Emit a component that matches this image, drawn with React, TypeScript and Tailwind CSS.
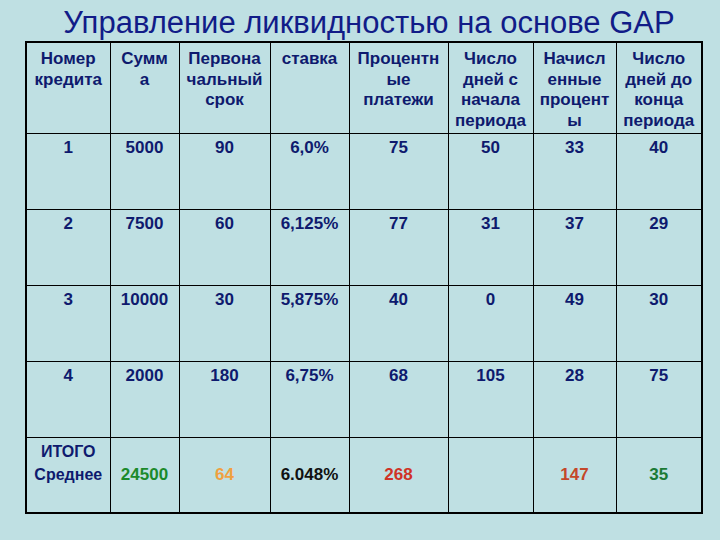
import React from "react";

const navy = "text-[#0e1a6e]";

const rows = [
  ["1", "5000", "90", "6,0%", "75", "50", "33", "40"],
  ["2", "7500", "60", "6,125%", "77", "31", "37", "29"],
  ["3", "10000", "30", "5,875%", "40", "0", "49", "30"],
  ["4", "2000", "180", "6,75%", "68", "105", "28", "75"],
];

const widths = [84, 69, 91, 79, 99, 85, 83, 86];

export default function App() {
  return (
    <div
      className="w-[720px] h-[540px] bg-[#bfe0e3] overflow-hidden"
      style={{ fontFamily: '"Liberation Sans", Arial, sans-serif' }}
    >
      <div className="h-[41px] pt-[5px] pl-[18px] text-center text-[31px] leading-[36px] text-[#111c88] whitespace-nowrap">
        Управление ликвидностью на основе GAP
      </div>
      <table className="ml-[25px] w-[676px] table-fixed border-collapse border-2 border-black text-[17px] font-bold">
        <colgroup>
          {widths.map((w, i) => (
            <col key={i} style={{ width: w }} />
          ))}
        </colgroup>
        <thead>
          <tr className="h-[91px]">
            {[
              ["Номер", "кредита"],
              ["Сумм", "а"],
              ["Первона", "чальный", "срок"],
              ["ставка"],
              ["Процентн", "ые", "платежи"],
              ["Число", "дней с", "начала", "периода"],
              ["Начисл", "енные", "процент", "ы"],
              ["Число", "дней до", "конца", "периода"],
            ].map((lines, i) => (
              <th
                key={i}
                className={`border border-black align-top pt-[6px] px-0 text-center font-bold leading-[20.5px] whitespace-nowrap ${navy}`}
              >
                {lines.map((l, j) => (
                  <div key={j}>{l}</div>
                ))}
              </th>
            ))}
          </tr>
        </thead>
        <tbody>
          {rows.map((r, i) => (
            <tr key={i} className="h-[76px]">
              {r.map((c, j) => (
                <td
                  key={j}
                  className={`border border-black align-top pt-[4px] text-center leading-[20px] ${navy}`}
                >
                  {c}
                </td>
              ))}
            </tr>
          ))}
          <tr className="h-[76px]">
            <td className={`border border-black align-middle text-center text-[16px] leading-[23px] ${navy}`}>
              <div>ИТОГО</div>
              <div>Среднее</div>
              <div>&nbsp;</div>
            </td>
            <td className="border border-black align-middle text-center text-[#1b8a2b]">24500</td>
            <td className="border border-black align-middle text-center text-[#f0a040]">64</td>
            <td className="border border-black align-middle text-center text-[#111111]">6.048%</td>
            <td className="border border-black align-middle text-center text-[#cf3326]">268</td>
            <td className="border border-black align-middle text-center"></td>
            <td className="border border-black align-middle text-center text-[#c4482a]">147</td>
            <td className="border border-black align-middle text-center text-[#1a7a35]">35</td>
          </tr>
        </tbody>
      </table>
    </div>
  );
}
